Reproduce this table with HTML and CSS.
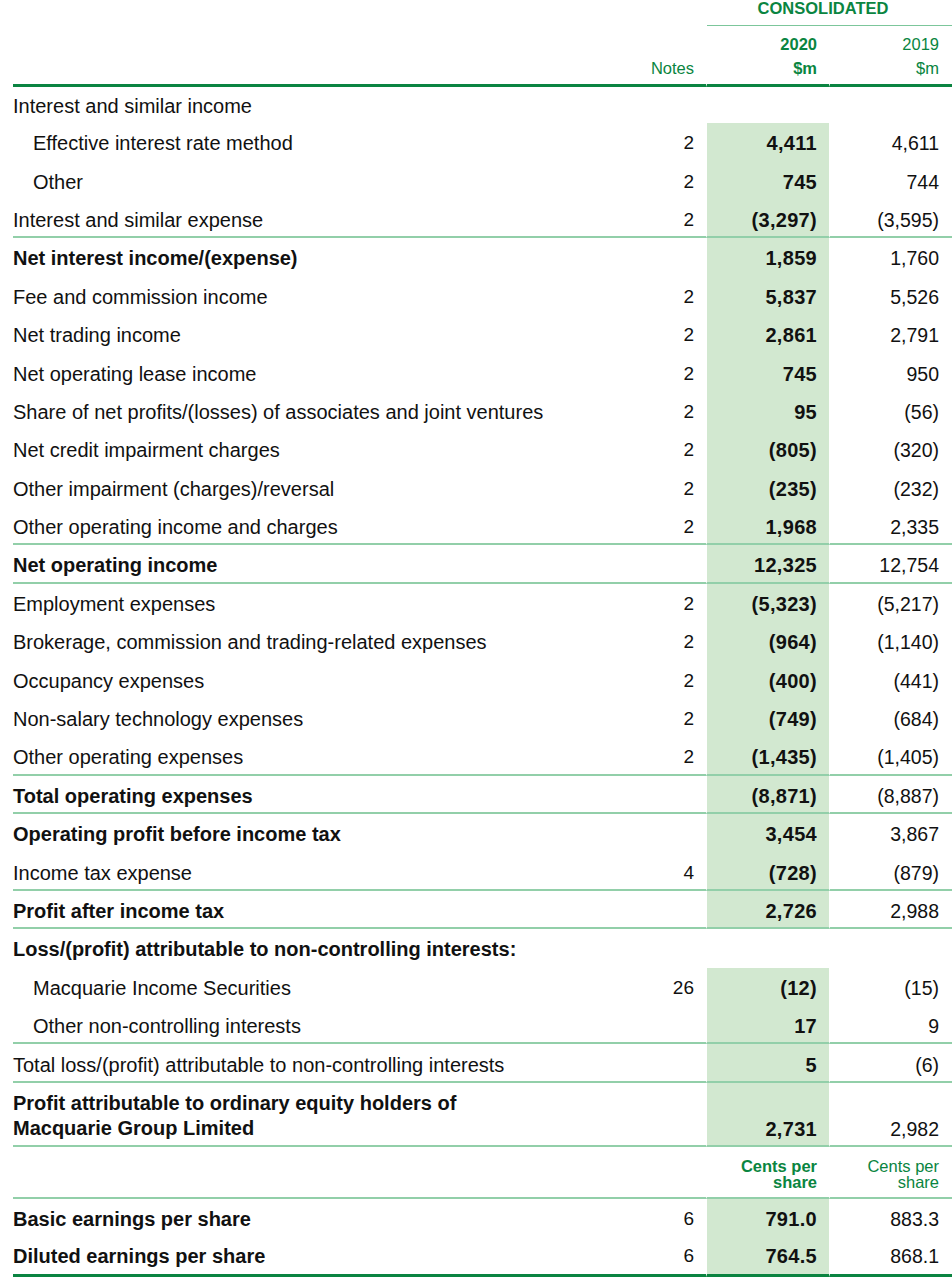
FILE: index.html
```html
<!DOCTYPE html>
<html lang="en">
<head>
<meta charset="utf-8">
<title>Income statement</title>
<link rel="stylesheet" href="styles.css">
</head>
<body>
<div class="statement">
  <div class="head">
    <div class="head-top">
      <div></div><div></div>
      <div class="consolidated">CONSOLIDATED</div>
    </div>
    <div class="head-cols">
      <div class="hc hlbl"></div>
      <div class="hc hnote">Notes</div>
      <div class="hc h20"><span>2020</span><span>$m</span></div>
      <div class="hc h19"><span>2019</span><span>$m</span></div>
    </div>
  </div>

  <div class="row first"><div class="lbl">Interest and similar income</div><div class="note"></div><div class="v20 empty"></div><div class="v19"></div></div>
  <div class="row"><div class="lbl indent">Effective interest rate method</div><div class="note">2</div><div class="v20">4,411</div><div class="v19">4,611</div></div>
  <div class="row"><div class="lbl indent">Other</div><div class="note">2</div><div class="v20">745</div><div class="v19">744</div></div>
  <div class="row sep"><div class="lbl">Interest and similar expense</div><div class="note">2</div><div class="v20">(3,297)</div><div class="v19">(3,595)</div></div>
  <div class="row"><div class="lbl strong">Net interest income/(expense)</div><div class="note"></div><div class="v20">1,859</div><div class="v19">1,760</div></div>
  <div class="row"><div class="lbl">Fee and commission income</div><div class="note">2</div><div class="v20">5,837</div><div class="v19">5,526</div></div>
  <div class="row"><div class="lbl">Net trading income</div><div class="note">2</div><div class="v20">2,861</div><div class="v19">2,791</div></div>
  <div class="row"><div class="lbl">Net operating lease income</div><div class="note">2</div><div class="v20">745</div><div class="v19">950</div></div>
  <div class="row"><div class="lbl">Share of net profits/(losses) of associates and joint ventures</div><div class="note">2</div><div class="v20">95</div><div class="v19">(56)</div></div>
  <div class="row"><div class="lbl">Net credit impairment charges</div><div class="note">2</div><div class="v20">(805)</div><div class="v19">(320)</div></div>
  <div class="row"><div class="lbl">Other impairment (charges)/reversal</div><div class="note">2</div><div class="v20">(235)</div><div class="v19">(232)</div></div>
  <div class="row sep"><div class="lbl">Other operating income and charges</div><div class="note">2</div><div class="v20">1,968</div><div class="v19">2,335</div></div>
  <div class="row sep"><div class="lbl strong">Net operating income</div><div class="note"></div><div class="v20">12,325</div><div class="v19">12,754</div></div>
  <div class="row"><div class="lbl">Employment expenses</div><div class="note">2</div><div class="v20">(5,323)</div><div class="v19">(5,217)</div></div>
  <div class="row"><div class="lbl">Brokerage, commission and trading-related expenses</div><div class="note">2</div><div class="v20">(964)</div><div class="v19">(1,140)</div></div>
  <div class="row"><div class="lbl">Occupancy expenses</div><div class="note">2</div><div class="v20">(400)</div><div class="v19">(441)</div></div>
  <div class="row"><div class="lbl">Non-salary technology expenses</div><div class="note">2</div><div class="v20">(749)</div><div class="v19">(684)</div></div>
  <div class="row sep"><div class="lbl">Other operating expenses</div><div class="note">2</div><div class="v20">(1,435)</div><div class="v19">(1,405)</div></div>
  <div class="row sep"><div class="lbl strong">Total operating expenses</div><div class="note"></div><div class="v20">(8,871)</div><div class="v19">(8,887)</div></div>
  <div class="row"><div class="lbl strong">Operating profit before income tax</div><div class="note"></div><div class="v20">3,454</div><div class="v19">3,867</div></div>
  <div class="row sep"><div class="lbl">Income tax expense</div><div class="note">4</div><div class="v20">(728)</div><div class="v19">(879)</div></div>
  <div class="row sep"><div class="lbl strong">Profit after income tax</div><div class="note"></div><div class="v20">2,726</div><div class="v19">2,988</div></div>
  <div class="row"><div class="lbl strong">Loss/(profit) attributable to non-controlling interests:</div><div class="note"></div><div class="v20 empty"></div><div class="v19"></div></div>
  <div class="row"><div class="lbl indent">Macquarie Income Securities</div><div class="note">26</div><div class="v20">(12)</div><div class="v19">(15)</div></div>
  <div class="row sep"><div class="lbl indent">Other non-controlling interests</div><div class="note"></div><div class="v20">17</div><div class="v19">9</div></div>
  <div class="row sep"><div class="lbl">Total loss/(profit) attributable to non-controlling interests</div><div class="note"></div><div class="v20">5</div><div class="v19">(6)</div></div>
  <div class="row double sep"><div class="lbl strong">Profit attributable to ordinary equity holders of<br>Macquarie Group Limited</div><div class="note"></div><div class="v20">2,731</div><div class="v19">2,982</div></div>
  <div class="row units sep"><div class="lbl"></div><div class="note"></div><div class="v20 empty">Cents per<br>share</div><div class="v19">Cents per<br>share</div></div>
  <div class="row"><div class="lbl strong">Basic earnings per share</div><div class="note">6</div><div class="v20">791.0</div><div class="v19">883.3</div></div>
  <div class="row last"><div class="lbl strong">Diluted earnings per share</div><div class="note">6</div><div class="v20">764.5</div><div class="v19">868.1</div></div>
</div>
</body>
</html>
```

FILE: styles.css
```css
* { box-sizing: border-box; }

html, body {
  margin: 0;
  padding: 0;
  background: #ffffff;
}

body {
  font-family: "Liberation Sans", Arial, sans-serif;
  color: #111111;
}

.statement {
  margin-left: 13px;
  width: 939px;
}

/* ---------- header ---------- */
.head-top,
.head-cols,
.row {
  display: grid;
  grid-template-columns: 1fr 110px 123px 123px;
}

.head-top {
  height: 26px;
}

.consolidated {
  grid-column: 3 / span 2;
  font-size: 16.5px;
  font-weight: bold;
  color: #0a8541;
  line-height: 16px;
  text-align: center;
  padding-right: 13px;
  margin-left: 1px;
  border-bottom: 1px solid #7cc69b;
}

.head-cols {
  height: 61px;
  font-size: 16.5px;
  line-height: 24px;
  color: #0a8541;
}

.hc {
  display: flex;
  flex-direction: column;
  justify-content: flex-end;
  align-items: flex-end;
  padding-bottom: 4px;
  border-bottom: 3px solid #0b8441;
}

.hnote { padding-right: 12px; }
.h20 { font-weight: bold; padding-right: 12px; border-left: 1px solid #ffffff; }
.h19 { padding-right: 13px; border-left: 1px solid #ffffff; }

/* ---------- body rows ---------- */
.row {
  height: 38.4px;
  font-size: 20px;
  line-height: 24px;
}

.row.first { height: 36px; }

.row > div {
  display: flex;
  align-items: center;
  padding-top: 2px;
}

.lbl.indent { padding-left: 20px; }
.lbl.strong { font-weight: bold; }

.note {
  justify-content: flex-end;
  padding-right: 12px;
  font-size: 19px;
}

.v20 {
  justify-content: flex-end;
  padding-right: 12px;
  font-weight: bold;
  letter-spacing: 0.3px;
  background: #d2e8d0;
  border-left: 1px solid #ffffff;
}

.v20.empty { background: transparent; }

.v19 {
  justify-content: flex-end;
  padding-right: 13px;
  font-size: 19.5px;
  border-left: 1px solid #ffffff;
}

.row.sep > div {
  padding-top: 4px;
  border-bottom: 2px solid #92cfa9;
}

.row.double { height: 64px; }
.row.double .lbl { line-height: 25px; }
.row.double .v20,
.row.double .v19 {
  align-items: flex-end;
  padding-bottom: 4px;
}

.row.units { height: 52px; }
.row.units .v20,
.row.units .v19 {
  font-size: 16.5px;
  line-height: 16px;
  letter-spacing: 0;
  color: #0a8541;
  text-align: right;
  padding-top: 4px;
}
.row.units .v19 { font-weight: normal; }

.row.last { height: 40px; }
.row.last > div {
  padding-top: 1px;
  border-bottom: 3px solid #0b8441;
}
```
